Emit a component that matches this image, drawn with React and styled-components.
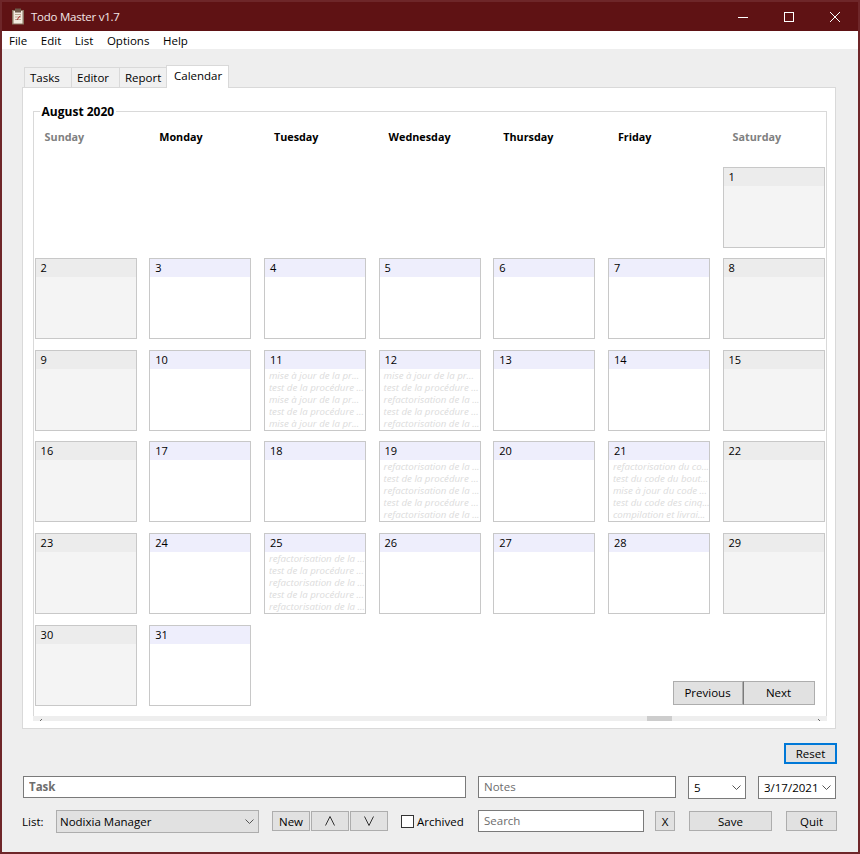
import React from 'react'
import styled, { createGlobalStyle } from 'styled-components'

const GlobalStyle = createGlobalStyle`
  html, body {
    margin: 0;
    padding: 0;
    background: #eeeeee;
  }
  * {
    box-sizing: border-box;
  }
`

const UI_FONT = `'Open Sans', 'Noto Sans', 'Liberation Sans', sans-serif`

const Window = styled.div`
  width: 860px;
  height: 854px;
  display: flex;
  flex-direction: column;
  background: #eeeeee;
  border: 2px solid #6e2629;
  font-family: ${UI_FONT};
  font-size: 11.5px;
  color: #000;
  overflow: hidden;
`

const TitleBar = styled.div`
  height: 29px;
  flex: none;
  display: flex;
  align-items: center;
  background: #5f1214;
  color: #f4e8e8;
  padding-left: 9px;
`

const TitleText = styled.span`
  margin-left: 6px;
  font-size: 11.5px;
  letter-spacing: -0.25px;
`

const WindowButtons = styled.div`
  margin-left: auto;
  display: flex;
`

const WindowButton = styled.div`
  width: 46px;
  height: 29px;
  display: flex;
  align-items: center;
  justify-content: center;
`

const MenuBar = styled.div`
  height: 18px;
  flex: none;
  display: flex;
  align-items: center;
  gap: 13.6px;
  padding-left: 7px;
  background: #fff;
`

const Content = styled.div`
  flex: 1;
  display: flex;
  flex-direction: column;
  padding: 16px 21px 0 20px;
`

const TabStrip = styled.div`
  display: flex;
  align-items: flex-end;
  height: 23px;
  padding-left: 2px;
  margin-bottom: -1px;
  position: relative;
  z-index: 1;
`

const Tab = styled.div`
  width: ${p => p.$w}px;
  height: ${p => (p.$active ? 23 : 21)}px;
  margin-right: -1px;
  display: flex;
  align-items: center;
  padding-left: ${p => (p.$active ? 7 : 5)}px;
  padding-bottom: ${p => (p.$active ? 3 : 0)}px;
  background: ${p => (p.$active ? '#fff' : '#f0f0f0')};
  border: 1px solid #d9d9d9;
  border-bottom: ${p => (p.$active ? 'none' : '1px solid #d9d9d9')};
`

const Panel = styled.div`
  width: 814px;
  height: 642px;
  flex: none;
  display: flex;
  flex-direction: column;
  background: #fff;
  border: 1px solid #d9d9d9;
  padding: 14px 8px 7px 10px;
`

const GroupBox = styled.fieldset`
  flex: 1;
  min-height: 0;
  margin: 0;
  padding: 0 0 0 0.6px;
  border: 1px solid #d9d9d9;
  border-bottom: none;
`

const GroupLegend = styled.legend`
  margin-left: 5px;
  padding: 2px 2px 0;
  font-weight: 700;
  font-size: 12px;
  line-height: 16px;
`

const DayHeader = styled.div`
  display: grid;
  grid-template-columns: repeat(7, 102px);
  column-gap: 12.67px;
  height: 46.6px;
  padding-top: 9px;
`

const DayName = styled.div`
  padding-left: 10px;
  font-weight: 700;
  font-size: 10.8px;
  line-height: 16px;
  color: ${p => (p.$weekend ? '#808080' : '#000')};
`

const MonthGrid = styled.div`
  display: grid;
  grid-template-columns: repeat(7, 102px);
  grid-auto-rows: 81px;
  column-gap: 12.67px;
  row-gap: 10.6px;
`

const DayCell = styled.div`
  grid-column: ${p => p.$col};
  display: flex;
  flex-direction: column;
  background: ${p => (p.$weekend ? '#f4f4f4' : '#fff')};
  border: 1px solid #c8c8c8;
  overflow: hidden;
`

const DayNumber = styled.div`
  height: 18px;
  flex: none;
  padding-left: 5px;
  line-height: 17px;
  font-size: 11px;
  background: ${p => (p.$weekend ? '#ececec' : '#eeeefc')};
`

const EventList = styled.div`
  padding-top: 1px;
`

const EventLine = styled.div`
  height: 12px;
  padding-left: 4px;
  font-size: 9.7px;
  font-style: italic;
  line-height: 12px;
  color: #dcdcdc;
  white-space: nowrap;
  overflow: hidden;
`

const Pager = styled.div`
  grid-column: 6 / 8;
  grid-row: 6;
  align-self: end;
  justify-self: end;
  display: flex;
  margin-right: 10px;
  margin-bottom: 1px;
`

const PagerButton = styled.div`
  width: ${p => p.$w}px;
  height: 24px;
  display: flex;
  align-items: center;
  justify-content: center;
  background: #e1e1e1;
  border: 1px solid #adadad;
  border-left-color: ${p => (p.$dark ? '#7a7a7a' : '#adadad')};
`

const ScrollTrack = styled.div`
  height: 5px;
  flex: none;
  display: flex;
  background: #eeeeee;
  padding: 0 5px;
  overflow: hidden;
`

const ScrollThumb = styled.div`
  width: 25px;
  height: 5px;
  margin: 0 auto 0 604px;
  background: #cdcdcd;
`

const ResetRow = styled.div`
  display: flex;
  justify-content: flex-end;
  margin-top: 14px;
  height: 21px;
`

const Button = styled.div`
  width: ${p => p.$w}px;
  height: ${p => p.$h || 20}px;
  margin-left: ${p => p.$ml || 0}px;
  margin-top: ${p => p.$mt || 0}px;
  flex: none;
  display: flex;
  align-items: center;
  justify-content: center;
  background: #e1e1e1;
  border: 1px solid #adadad;
`

const FocusButton = styled(Button)`
  border: 2px solid #0078d7;
`

const FormRow = styled.div`
  display: flex;
  align-items: flex-start;
  margin-top: ${p => p.$mt}px;
`

const TextField = styled.input`
  width: ${p => p.$w}px;
  height: 22px;
  margin: 0 0 0 ${p => p.$ml || 0}px;
  padding: 0 0 1px 5px;
  flex: none;
  background: #fff;
  border: 1px solid #7a7a7a;
  border-radius: 0;
  outline: none;
  font-family: ${UI_FONT};
  font-size: 11.5px;
  font-weight: ${p => (p.$bold ? 700 : 400)};
  &::placeholder {
    color: #6d6d6d;
    opacity: 1;
  }
`

const SelectBox = styled.div`
  width: ${p => p.$w}px;
  height: 23px;
  margin-left: ${p => p.$ml || 0}px;
  flex: none;
  display: flex;
  align-items: center;
  justify-content: space-between;
  padding: 0 4px ${p => (p.$filled ? 0 : 1)}px ${p => (p.$filled ? 3 : 5)}px;
  background: ${p => (p.$filled ? '#e1e1e1' : '#fff')};
  border: 1px solid ${p => (p.$filled ? '#adadad' : '#7a7a7a')};
`

const ListLabel = styled.span`
  width: 34px;
  flex: none;
  line-height: 23px;
`

const ArchivedLabel = styled.label`
  display: flex;
  align-items: center;
  gap: 3px;
  margin-left: 13px;
  height: 23px;
  width: 77px;
  flex: none;
`

const CheckBox = styled.span`
  width: 13px;
  height: 13px;
  flex: none;
  background: #fff;
  border: 1px solid #333;
`

const Chevron = () => (
  <svg width="9" height="5" viewBox="0 0 9 5">
    <path d="M0.5 0.5 L4.5 4.5 L8.5 0.5" fill="none" stroke="#555" strokeWidth="1" />
  </svg>
)

const MoveUpIcon = () => (
  <svg width="10" height="10" viewBox="0 0 10 10">
    <path d="M0.5 9.5 L5 0.5 L9.5 9.5" fill="none" stroke="#333" strokeWidth="1" />
  </svg>
)

const MoveDownIcon = () => (
  <svg width="10" height="10" viewBox="0 0 10 10">
    <path d="M0.5 0.5 L5 9.5 L9.5 0.5" fill="none" stroke="#333" strokeWidth="1" />
  </svg>
)

const ClipboardIcon = () => (
  <svg width="14" height="17" viewBox="0 0 14 17">
    <rect x="1" y="2" width="12" height="14.5" fill="#8a7460" />
    <rect x="2.5" y="3" width="9" height="12.5" fill="#f1ebdf" />
    <rect x="4" y="0.5" width="6" height="4" fill="#6e5b4c" />
    <path d="M4 6.5h6M4 9h6M4 11.5h6" stroke="#b9a892" strokeWidth="1" />
    <path d="M6 12l2-3 1.5-1" stroke="#a33" strokeWidth="1" fill="none" />
  </svg>
)

const MinimizeIcon = () => (
  <svg width="10" height="10" viewBox="0 0 10 10">
    <path d="M0 5.5h10" stroke="#fff" strokeWidth="1" />
  </svg>
)

const MaximizeIcon = () => (
  <svg width="10" height="10" viewBox="0 0 10 10">
    <rect x="0.5" y="0.5" width="9" height="9" fill="none" stroke="#fff" strokeWidth="1" />
  </svg>
)

const CloseIcon = () => (
  <svg width="10" height="10" viewBox="0 0 10 10">
    <path d="M0 0L10 10M10 0L0 10" stroke="#fff" strokeWidth="1" />
  </svg>
)

const ScrollArrow = ({ flip }) => (
  <svg width="5" height="5" viewBox="0 0 5 5">
    <path d={flip ? 'M1 3L3 5' : 'M4 3L2 5'} stroke="#666" strokeWidth="1" fill="none" />
  </svg>
)

const MISE = 'mise à jour de la pr...'
const TEST = 'test de la procédure ...'
const REFA = 'refactorisation de la ...'

const EVENTS = {
  11: [MISE, TEST, MISE, TEST, MISE],
  12: [MISE, TEST, REFA, TEST, REFA],
  19: [REFA, TEST, REFA, TEST, REFA],
  21: [
    'refactorisation du co...',
    'test du code du bout...',
    'mise à jour du code ...',
    'test du code des cinq...',
    'compilation et livrai...',
  ],
  25: [REFA, TEST, REFA, TEST, REFA],
}

const DAY_NAMES = ['Sunday', 'Monday', 'Tuesday', 'Wednesday', 'Thursday', 'Friday', 'Saturday']
const MENU_ITEMS = ['File', 'Edit', 'List', 'Options', 'Help']
const FIRST_DAY_COL = 7

const days = Array.from({ length: 31 }, (_, i) => i + 1)

export default function App() {
  return (
    <>
      <GlobalStyle />
      <Window>
        <TitleBar>
          <ClipboardIcon />
          <TitleText>Todo Master v1.7</TitleText>
          <WindowButtons>
            <WindowButton><MinimizeIcon /></WindowButton>
            <WindowButton><MaximizeIcon /></WindowButton>
            <WindowButton><CloseIcon /></WindowButton>
          </WindowButtons>
        </TitleBar>

        <MenuBar>
          {MENU_ITEMS.map(item => <span key={item}>{item}</span>)}
        </MenuBar>

        <Content>
          <TabStrip>
            <Tab $w={48}>Tasks</Tab>
            <Tab $w={49}>Editor</Tab>
            <Tab $w={48}>Report</Tab>
            <Tab $w={63} $active>Calendar</Tab>
          </TabStrip>

          <Panel>
            <GroupBox>
              <GroupLegend>August 2020</GroupLegend>
              <DayHeader>
                {DAY_NAMES.map((name, i) => (
                  <DayName key={name} $weekend={i === 0 || i === 6}>{name}</DayName>
                ))}
              </DayHeader>
              <MonthGrid>
                {days.map(day => {
                  const col = (day + FIRST_DAY_COL - 2) % 7 + 1
                  const weekend = col === 1 || col === 7
                  return (
                    <DayCell key={day} $col={col} $weekend={weekend}>
                      <DayNumber $weekend={weekend}>{day}</DayNumber>
                      {EVENTS[day] && (
                        <EventList>
                          {EVENTS[day].map((text, i) => <EventLine key={i}>{text}</EventLine>)}
                        </EventList>
                      )}
                    </DayCell>
                  )
                })}
                <Pager>
                  <PagerButton $w={70}>Previous</PagerButton>
                  <PagerButton $w={72} $dark>Next</PagerButton>
                </Pager>
              </MonthGrid>
            </GroupBox>
            <ScrollTrack>
              <ScrollArrow />
              <ScrollThumb />
              <ScrollArrow flip />
            </ScrollTrack>
          </Panel>

          <ResetRow>
            <FocusButton $w={53} $h={21}>Reset</FocusButton>
          </ResetRow>

          <FormRow $mt={12}>
            <TextField $w={443} $ml={1} $bold placeholder="Task" />
            <TextField $w={198} $ml={12} placeholder="Notes" />
            <SelectBox $w={58} $ml={12}>5<Chevron /></SelectBox>
            <SelectBox $w={78} $ml={12}>3/17/2021<Chevron /></SelectBox>
          </FormRow>

          <FormRow $mt={11}>
            <ListLabel>List:</ListLabel>
            <SelectBox $w={203} $filled>Nodixia Manager<Chevron /></SelectBox>
            <Button $w={38} $ml={13} $mt={1}>New</Button>
            <Button $w={38} $ml={1} $mt={1}><MoveUpIcon /></Button>
            <Button $w={38} $ml={1} $mt={1}><MoveDownIcon /></Button>
            <ArchivedLabel><CheckBox />Archived</ArchivedLabel>
            <TextField $w={166} placeholder="Search" />
            <Button $w={20} $ml={11} $mt={1}>X</Button>
            <Button $w={83} $ml={14} $mt={1}>Save</Button>
            <Button $w={51} $ml={14} $mt={1}>Quit</Button>
          </FormRow>
        </Content>
      </Window>
    </>
  )
}
